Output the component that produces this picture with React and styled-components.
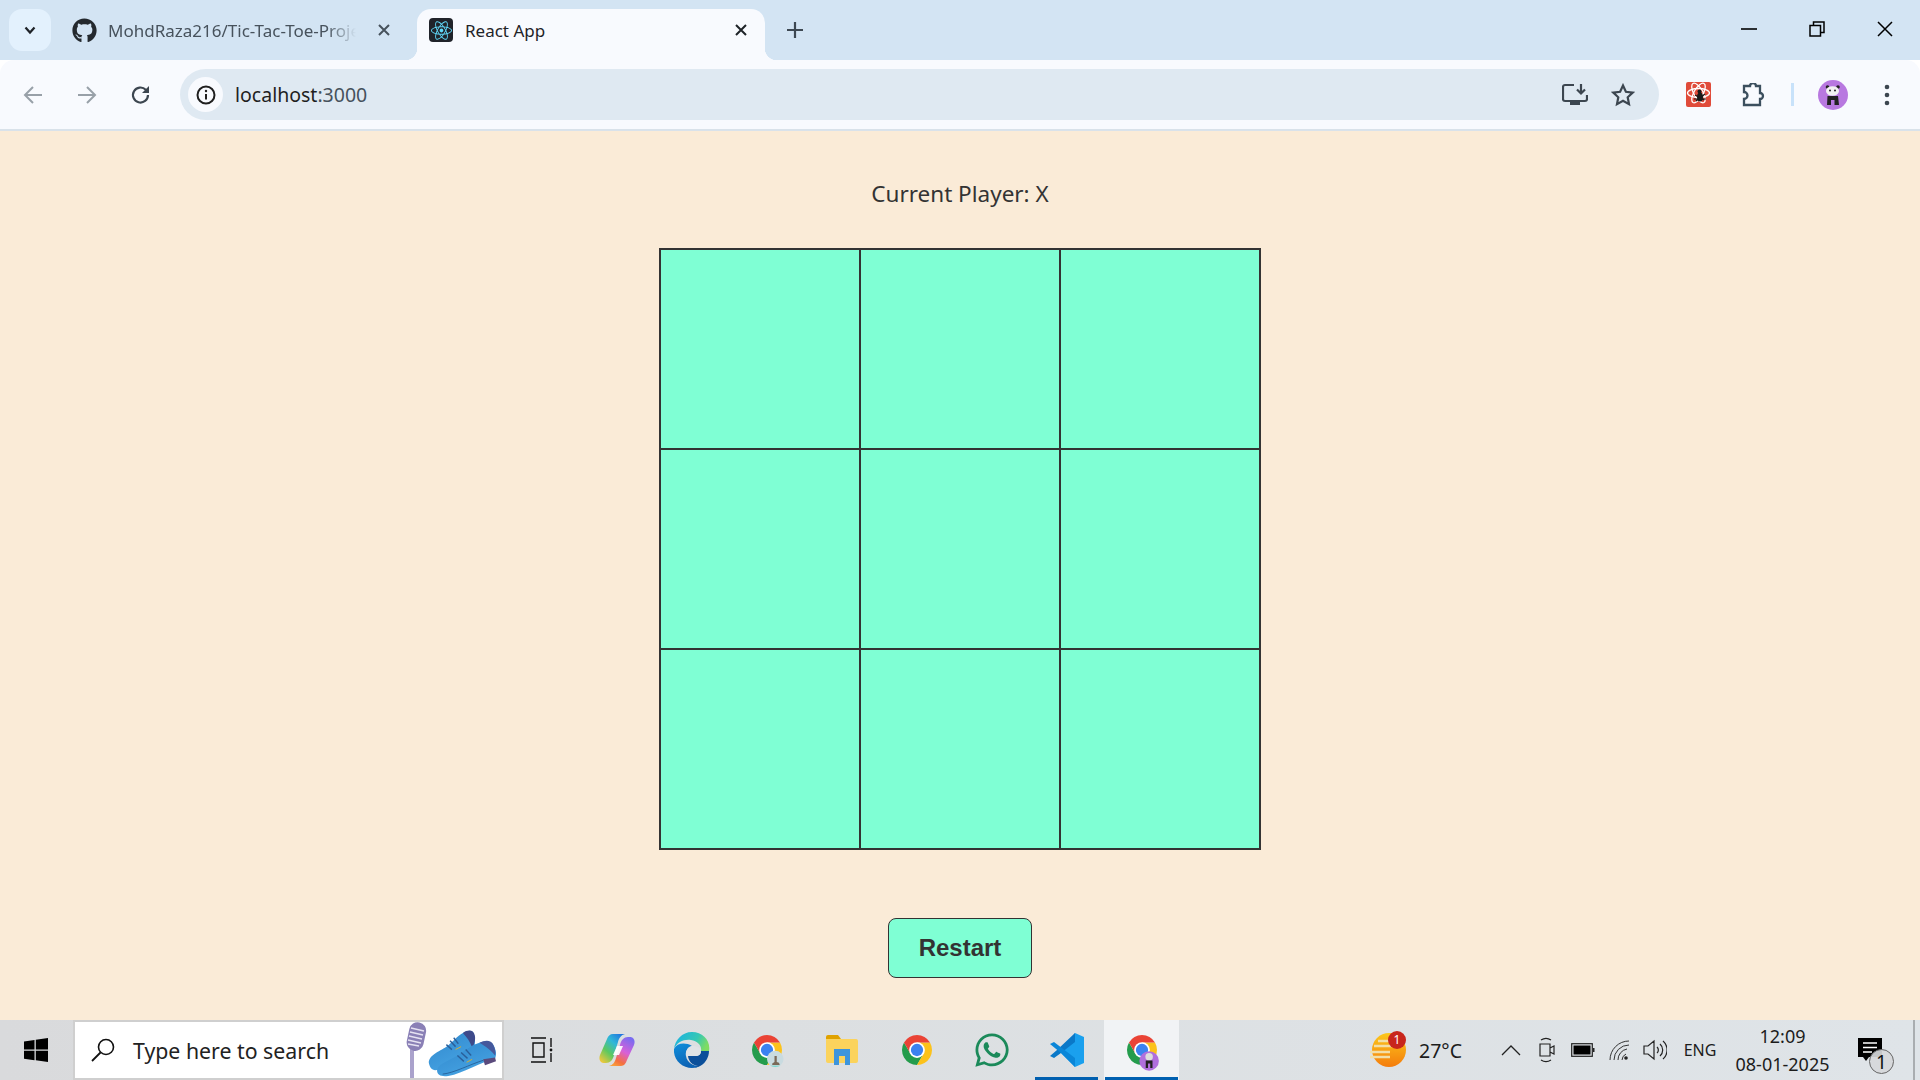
import styled, { createGlobalStyle } from "styled-components"
import { FaGithub, FaReact, FaWhatsapp } from "react-icons/fa"

const UI_FONT = `"Noto Sans", "Open Sans", "Liberation Sans", sans-serif`

const GlobalStyle = createGlobalStyle`
  html, body {
    margin: 0;
    height: 100%;
    overflow: hidden;
    font-family: ${UI_FONT};
  }
  #root {
    height: 100%;
  }
`

const Screen = styled.div`
  height: 1080px;
  display: flex;
  flex-direction: column;
`

/* browser chrome */

const TabStrip = styled.div`
  flex: 0 0 60px;
  display: flex;
  align-items: flex-start;
  padding-top: 9px;
  box-sizing: border-box;
  background: #d3e4f3;
`

const TabListButton = styled.div`
  flex: 0 0 42px;
  height: 42px;
  margin-left: 9px;
  display: flex;
  align-items: center;
  justify-content: center;
  border-radius: 13px;
  background: #e3f1fd;
`

const Tab = styled.div`
  position: relative;
  flex: 0 0 ${(props) => props.$width}px;
  min-width: 0;
  height: ${(props) => (props.$active ? 51 : 42)}px;
  padding: ${(props) =>
    props.$active ? "0 12px 9px 12px" : "0 21px 0 21px"};
  box-sizing: border-box;
  display: flex;
  align-items: center;
  gap: ${(props) => (props.$active ? 12 : 11)}px;
  font-size: 17px;
  color: ${(props) => (props.$active ? "#1f2328" : "#47525c")};
  background: ${(props) => (props.$active ? "#f8fafe" : "transparent")};
  border-radius: 14px 14px 0 0;

  ${(props) =>
    props.$active &&
    `
    &::before, &::after {
      content: "";
      position: absolute;
      bottom: 0;
      width: 12px;
      height: 12px;
    }
    &::before {
      left: -12px;
      background: radial-gradient(circle at 0 0, transparent 12px, #f8fafe 12.5px);
    }
    &::after {
      right: -12px;
      background: radial-gradient(circle at 100% 0, transparent 12px, #f8fafe 12.5px);
    }
  `}
`

const TabTitle = styled.div`
  flex: 1 1 0;
  min-width: 0;
  overflow: hidden;
  white-space: nowrap;
  ${(props) =>
    props.$fade &&
    `
    margin-right: 5px;
    mask-image: linear-gradient(90deg, #000 88%, transparent 100%);
  `}
`

const Favicon = styled.div`
  flex: 0 0 24px;
  height: 24px;
  display: flex;
  align-items: center;
  justify-content: center;
  border-radius: 4px;
  background: ${(props) => props.$bg || "transparent"};
`

const NewTab = styled.div`
  margin-left: 18px;
  height: 42px;
  display: flex;
  align-items: center;
`

const WindowControls = styled.div`
  margin-left: auto;
  margin-top: -9px;
  margin-right: 1px;
  display: flex;
`

const WindowControl = styled.div`
  width: 68px;
  height: 58px;
  display: flex;
  align-items: center;
  justify-content: center;
`

const Toolbar = styled.div`
  flex: 0 0 69px;
  display: flex;
  align-items: center;
  padding: 0 6px;
  box-sizing: border-box;
  background: #f8fafe;
  border-radius: 14px 14px 0 0;
`

const ToolSlot = styled.div`
  flex: 0 0 ${(props) => props.$width || 54}px;
  display: flex;
  align-items: center;
  justify-content: center;
`

const AddressBar = styled.div`
  flex: 1 1 0;
  height: 51px;
  margin: 0 12px;
  padding: 0 12px 0 8px;
  display: flex;
  align-items: center;
  border-radius: 26px;
  background: #dfe9f2;
`

const SiteInfo = styled.div`
  flex: 0 0 35px;
  height: 35px;
  display: flex;
  align-items: center;
  justify-content: center;
  border-radius: 50%;
  background: #f8fafe;
`

const Url = styled.div`
  flex: 1 1 0;
  margin-left: 12px;
  font-size: 19.5px;
  color: #1f1f1f;

  span {
    color: #46515c;
  }
`

const ToolDivider = styled.div`
  flex: 0 0 3px;
  height: 23px;
  margin: 0 12px 0 12px;
  background: #c8e2fa;
`

const ToolbarEdge = styled.div`
  flex: 0 0 2px;
  background: #d9e2ea;
`

/* page */

const Page = styled.main`
  flex: 1 1 0;
  display: flex;
  flex-direction: column;
  align-items: center;
  background: #faebd7;
  color: #333;
`

const Status = styled.div`
  margin-top: 46px;
  height: 33px;
  line-height: 33px;
  font-size: 22.5px;
`

const Board = styled.div`
  margin-top: 38px;
  display: grid;
  grid-template-columns: repeat(3, 200px);
  grid-template-rows: repeat(3, 200px);
  border: 1px solid #333;
`

const Cell = styled.div`
  box-sizing: border-box;
  border: 1px solid #333;
  background: #7fffd4;
`

const RestartButton = styled.button`
  margin-top: 68px;
  width: 144px;
  height: 60px;
  padding: 0;
  border: 1px solid #333;
  border-radius: 8px;
  background: #7fffd4;
  color: #333;
  font-family: "Liberation Sans", Arial, sans-serif;
  font-size: 24px;
  font-weight: bold;
`

/* taskbar */

const Taskbar = styled.footer`
  flex: 0 0 60px;
  display: flex;
  align-items: stretch;
  background: linear-gradient(90deg, #d9dadc 0%, #dcdfe1 40%, #dfe4e8 100%);
`

const StartButton = styled.div`
  flex: 0 0 73px;
  padding-right: 2px;
  box-sizing: border-box;
  display: flex;
  align-items: center;
  justify-content: center;
`

const SearchBox = styled.div`
  flex: 0 0 431px;
  box-sizing: border-box;
  display: flex;
  align-items: center;
  padding-left: 15px;
  gap: 17px;
  border: 2px solid #cfcfcf;
  background: #fff;
  font-size: 21.3px;
  color: #222;
  overflow: hidden;
`

const SearchLabel = styled.div`
  flex: 1 1 0;
  white-space: nowrap;
`

const SearchArt = styled.div`
  flex: 0 0 98px;
  height: 100%;
  display: flex;
  align-items: flex-end;

  svg {
    flex: none;
    display: block;
  }
`

const TaskSlot = styled.div`
  position: relative;
  flex: 0 0 75px;
  display: flex;
  align-items: center;
  justify-content: center;
  background: ${(props) => (props.$focused ? "#f1f3f5" : "transparent")};

  ${(props) =>
    (props.$open || props.$focused) &&
    `
    &::after {
      content: "";
      position: absolute;
      bottom: 0;
      left: ${props.$focused ? 1 : 6}px;
      right: ${props.$focused ? 1 : 6}px;
      height: 3px;
      background: #0060b0;
    }
  `}
`

const Tray = styled.div`
  margin-left: auto;
  display: flex;
  align-items: center;
  color: #1c1c1c;
`

const Weather = styled.div`
  display: flex;
  align-items: center;
  gap: 11px;
  margin-right: 31px;
  font-size: 19.5px;
`

const TraySlot = styled.div`
  flex: 0 0 ${(props) => props.$width || 36}px;
  width: ${(props) => props.$width || 36}px;
  display: flex;
  align-items: center;
  justify-content: center;
  font-size: 16px;
`

const Clock = styled.div`
  flex: 0 0 111px;
  display: flex;
  flex-direction: column;
  align-items: center;
  gap: 5px;
  font-size: 18px;
  line-height: 23px;
`

const Notifications = styled.div`
  position: relative;
  flex: 0 0 77px;
  height: 60px;
  box-sizing: border-box;
  padding-right: 11px;
  border-right: 2px solid #a9adb0;
  margin-right: 5px;
  display: flex;
  align-items: center;
  justify-content: center;
`

const NotificationCount = styled.div`
  position: absolute;
  left: 31px;
  top: 29px;
  width: 25px;
  height: 25px;
  box-sizing: border-box;
  display: flex;
  align-items: center;
  justify-content: center;
  border: 1px solid #666;
  border-radius: 50%;
  background: rgba(214, 216, 218, 0.92);
  font-size: 19px;
  color: #111;
`

/* drawings */

const PandaBadge = () => (
  <g>
    <circle cx="33.500" cy="38.500" r="13" fill="#b06fdd" />
    <circle cx="33.500" cy="33" r="5" fill="#ddd" />
    <path d="M29 38h9v10h-3v-6h-3v6h-3z" fill="#222" />
  </g>
)

const ChromeLogo = ({ badge }) => (
  <svg width="36" height="36" viewBox="0 0 48 48" overflow="visible">
    <path d="M6.680 14A20 20 0 0 0 24 44l8.660-15H15.340z" fill="#249c4c" />
    <path d="M24 14h17.320A20 20 0 0 1 24 44l8.660-15z" fill="#fcc21b" />
    <path d="M24 14h17.320a20 20 0 0 0-34.640 0l8.660 15L24 24z" fill="#ea4335" />
    <circle cx="24" cy="24" r="10.500" fill="#fff" />
    <circle cx="24" cy="24" r="8.200" fill="#3b82f0" />
    {badge === "dog" && (
      <g>
        <circle cx="35" cy="36" r="11" fill="#c9dbe0" />
        <path d="M31 44h10l-1-3-3-1v-8h-3v8l-3 2z" fill="#7a6a58" />
        <path d="M28 45a10 4 0 0 0 14 0z" fill="#62d8c8" />
      </g>
    )}
    {badge === "panda" && <PandaBadge />}
  </svg>
)

const Panda = () => (
  <svg width="30" height="30" viewBox="0 0 30 30">
    <circle cx="15" cy="15" r="15" fill="#b878e0" />
    <circle cx="9.500" cy="7" r="1.800" fill="#222" />
    <circle cx="20" cy="7" r="1.800" fill="#222" />
    <ellipse cx="14.500" cy="11" rx="6.500" ry="4.800" fill="#f2f2f2" />
    <circle cx="12" cy="10.500" r="1" fill="#222" />
    <circle cx="17" cy="10.500" r="1" fill="#222" />
    <path d="M9.500 16h10.500l1 9h-4.500v-5h-3.500v5H9z" fill="#222" />
  </svg>
)

const ReactBugExtension = () => (
  <svg width="25" height="25" viewBox="0 0 25 25">
    <rect width="25" height="25" rx="2" fill="#e04b3a" />
    <g fill="none" stroke="#fff" strokeWidth="1.300">
      <ellipse cx="12.500" cy="11" rx="11" ry="4.500" />
      <ellipse cx="12.500" cy="11" rx="11" ry="4.500" transform="rotate(60 12.500 11)" />
      <ellipse cx="12.500" cy="11" rx="11" ry="4.500" transform="rotate(120 12.500 11)" />
    </g>
    <ellipse cx="14" cy="15" rx="3" ry="4.500" fill="#1a1a1a" />
    <circle cx="13.500" cy="9.500" r="2" fill="#1a1a1a" />
    <path d="M9 13l9 5M19 12l-9 7M8 17h12" stroke="#1a1a1a" strokeWidth="1.200" />
  </svg>
)

const EdgeLogo = () => (
  <svg width="36" height="36" viewBox="0 0 36 36">
    <defs>
      <linearGradient id="edgeTop" x1="0.1" y1="0.2" x2="1" y2="0.5">
        <stop offset="0" stopColor="#1fb5dc" />
        <stop offset="0.6" stopColor="#35c8b4" />
        <stop offset="1" stopColor="#7fdc62" />
      </linearGradient>
      <linearGradient id="edgeBody" x1="0" y1="0" x2="0.4" y2="1">
        <stop offset="0" stopColor="#0f8fdc" />
        <stop offset="1" stopColor="#0c62b4" />
      </linearGradient>
    </defs>
    <path d="M18 0C8 0 1 8 0 17c3-7 10-10 17-9 7 1 11 6 10 11h8c2-10-6-19-17-19z" fill="url(#edgeTop)" />
    <path d="M0 17C-1 28 8 36 18 36c3 0 5-1 7-2-5 0-12-3-13-10-1-6 3-9 6-10-7-4-15-3-18 3z" fill="url(#edgeBody)" />
    <path d="M18 36c6 0 12-3 15-9 1-2 2-5 2-8h-8c0 3-2 5-6 5-3 0-5 0-7-1 0 6 4 10 10 11-2 1-4 2-6 2z" fill="#0b4f9a" />
    <path d="M12 24c-1-6 3-10 6-10 5 0 9 2 9 5 0 3-2 5-6 5-3 0-6 0-9 0z" fill="#dfe3e6" />
  </svg>
)

const FolderLogo = () => (
  <svg width="32" height="30" viewBox="0 0 32 30">
    <path d="M0 2a2 2 0 0 1 2-2h10l3 4H0z" fill="#e0a200" />
    <path d="M0 4h30a2 2 0 0 1 2 2v20a2 2 0 0 1-2 2H2a2 2 0 0 1-2-2z" fill="#fbd35c" />
    <path d="M8 14h16v16h-5v-9h-6v9H8z" fill="#3d95dc" />
  </svg>
)

const VsCodeLogo = () => (
  <svg width="36" height="36" viewBox="0 0 36 36">
    <path d="M26 1l9 4v26l-9 4-14-14z" fill="#1aa0ee" />
    <path d="M26 1v9L12 21l-7 5-4-2 7-6z" fill="#0a78c8" />
    <path d="M1 12l4-2 21 16v9L12 21z" fill="#0a86d8" />
  </svg>
)

const CopilotLogo = () => (
  <svg width="36" height="34" viewBox="0 0 36 34">
    <defs>
      <linearGradient id="copLeft" x1="0.9" y1="0" x2="0.1" y2="1">
        <stop offset="0" stopColor="#1f6fe0" />
        <stop offset="0.35" stopColor="#2fb8d8" />
        <stop offset="0.65" stopColor="#5cc860" />
        <stop offset="1" stopColor="#f6c83a" />
      </linearGradient>
      <linearGradient id="copRight" x1="0.7" y1="0" x2="0.2" y2="1">
        <stop offset="0" stopColor="#7a6cf0" />
        <stop offset="0.45" stopColor="#d860d8" />
        <stop offset="0.8" stopColor="#f4703e" />
        <stop offset="1" stopColor="#f9a03a" />
      </linearGradient>
    </defs>
    <path d="M14 1h12c-4 1-6 4-7 8l-4 13c-1 5-4 8-8 8H5c-4 0-5.500-4-4-8L8 6c1-3 3-5 6-5z" fill="url(#copLeft)" />
    <path d="M22 33H10c4-1 6-4 7-8l4-13c1-5 4-8 8-8h2c4 0 5.500 4 4 8l-7 15c-1 3-3 6-6 6z" fill="url(#copRight)" />
    <path d="M18 13h6l-4 9h-6z" fill="#fff" opacity="0.92" />
  </svg>
)

const Microphone = () => (
  <svg width="24" height="56" viewBox="0 0 24 56">
    <rect x="6" y="24" width="4" height="32" fill="#aaa2cc" />
    <rect x="4" y="0" width="17" height="29" rx="8.500" fill="#8a80b6" transform="rotate(12 12 14)" />
    <path d="M7 6l13 3M6 10l13 3M5 14l13 3M4 18l13 3M4 22l11 2" stroke="#e6e2f2" strokeWidth="1.300" />
  </svg>
)

const Shoes = () => (
  <svg width="68" height="50" viewBox="0 0 74 51" preserveAspectRatio="none">
    <defs>
      <linearGradient id="shoeBlue" x1="0" y1="0" x2="0.6" y2="1">
        <stop offset="0" stopColor="#2f86cc" />
        <stop offset="1" stopColor="#46a3e2" />
      </linearGradient>
    </defs>
    <path d="M1 36C0 28 12 24 20 19c6-4 12-11 18-14 6-3 11-3 12 1 2 6 1 14-1 20-13 6-29 16-41 17-4 0-6-3-7-7z" fill="url(#shoeBlue)" />
    <path d="M38 5c6-4 12-3 13 3 1 4-1 10-3 12-2-6-6-11-10-15z" fill="#3e4a8a" />
    <path d="M10 42c2-6 16-10 24-15 6-4 14-10 22-12 6-2 13-2 15 2 3 5 4 10 2 14-13 3-35 15-51 18-8 1-13-1-12-7z" fill="url(#shoeBlue)" />
    <path d="M56 15c6-3 13-3 15 2 2 4 3 7 2 11-3-4-11-10-17-13z" fill="#45589c" />
    <path d="M60 32l13-2 1 4-12 4z" fill="#5a4a7c" />
    <path d="M16 47c12-1 30-10 44-14" stroke="#27639c" strokeWidth="1" fill="none" />
    <path d="M24 13l6 6M20 17l6 5M28 10l5 6M36 25l7 6M32 28l7 6M41 22l6 6" stroke="#2a5f9a" strokeWidth="1.500" />
    <path d="M30 22l6-3M42 35l6-3" stroke="#d8b030" strokeWidth="1" />
  </svg>
)

const WeatherIcon = () => (
  <svg width="38" height="38" viewBox="0 0 38 38">
    <defs>
      <linearGradient id="sun" x1="0" y1="0" x2="0" y2="1">
        <stop offset="0" stopColor="#fcc81c" />
        <stop offset="1" stopColor="#f47c0c" />
      </linearGradient>
    </defs>
    <circle cx="19" cy="19" r="17" fill="url(#sun)" />
    <path d="M8 10h12M4 15h18M0 21h20M0 26h20" stroke="#f2dfa8" strokeWidth="2.500" />
    <circle cx="27" cy="9" r="9" fill="#c8261c" />
    <text x="27" y="13" textAnchor="middle" fontSize="12" fill="#fff" fontFamily="Noto Sans">1</text>
  </svg>
)

const stroke = (color, width = 2) => ({
  fill: "none",
  stroke: color,
  strokeWidth: width,
})

export default function App() {
  const cells = Array.from({ length: 9 }, (_, i) => i)

  return (
    <Screen>
      <GlobalStyle />

      <TabStrip>
        <TabListButton>
          <svg width="14" height="14" viewBox="0 0 14 14">
            <path d="M2.500 4.500L7 9.500l4.500-5" {...stroke("#1f2328", 2.2)} />
          </svg>
        </TabListButton>
        <Tab $width={366}>
          <Favicon>
            <FaGithub size={25} color="#24292e" />
          </Favicon>
          <TabTitle $fade>MohdRaza216/Tic-Tac-Toe-Project</TabTitle>
          <Favicon>
            <svg width="14" height="14" viewBox="0 0 14 14">
              <path d="M2 2l10 10M12 2L2 12" {...stroke("#47525c")} />
            </svg>
          </Favicon>
        </Tab>
        <Tab $width={348} $active>
          <Favicon $bg="#20232a">
            <FaReact size={21} color="#61dafb" />
          </Favicon>
          <TabTitle>React App</TabTitle>
          <Favicon>
            <svg width="14" height="14" viewBox="0 0 14 14">
              <path d="M2 2l10 10M12 2L2 12" {...stroke("#1f2328")} />
            </svg>
          </Favicon>
        </Tab>
        <NewTab>
          <svg width="24" height="24" viewBox="0 0 24 24">
            <path d="M12 4v16M4 12h16" {...stroke("#3d4852", 2.2)} />
          </svg>
        </NewTab>
        <WindowControls>
          <WindowControl>
            <svg width="16" height="16" viewBox="0 0 16 16">
              <path d="M0 8h16" {...stroke("#000", 1.6)} />
            </svg>
          </WindowControl>
          <WindowControl>
            <svg width="16" height="16" viewBox="0 0 16 16">
              <path d="M1 4.500h10.500V15H1zM4.500 4.500V1H15v10.500h-3.500" {...stroke("#000", 1.5)} />
            </svg>
          </WindowControl>
          <WindowControl>
            <svg width="16" height="16" viewBox="0 0 16 16">
              <path d="M1 1l14 14M15 1L1 15" {...stroke("#000", 1.5)} />
            </svg>
          </WindowControl>
        </WindowControls>
      </TabStrip>

      <Toolbar>
        <ToolSlot>
          <svg width="22" height="22" viewBox="0 0 22 22">
            <path d="M20 11H3M11 3l-8 8 8 8" {...stroke("#98a0a8")} />
          </svg>
        </ToolSlot>
        <ToolSlot>
          <svg width="22" height="22" viewBox="0 0 22 22">
            <path d="M2 11h17M11 3l8 8-8 8" {...stroke("#98a0a8")} />
          </svg>
        </ToolSlot>
        <ToolSlot>
          <svg width="22" height="22" viewBox="0 0 22 22">
            <path d="M18 11a7.500 7.500 0 1 1-2.200-5.300L18 8" {...stroke("#3c4650", 2.2)} />
            <path d="M19 2v7h-7z" fill="#3c4650" />
          </svg>
        </ToolSlot>
        <AddressBar>
          <SiteInfo>
            <svg width="20" height="20" viewBox="0 0 20 20">
              <circle cx="10" cy="10" r="8.500" {...stroke("#1f1f1f")} />
              <path d="M10 9v5.500" {...stroke("#1f1f1f")} />
              <circle cx="10" cy="6" r="1.200" fill="#1f1f1f" />
            </svg>
          </SiteInfo>
          <Url>
            localhost<span>:3000</span>
          </Url>
          <ToolSlot $width={48}>
            <svg width="26" height="24" viewBox="0 0 26 24">
              <path d="M12 2H3a2 2 0 0 0-2 2v12a2 2 0 0 0 2 2h20a2 2 0 0 0 2-2v-4" {...stroke("#3c4650", 2.2)} />
              <path d="M8 19h10v3H8z" fill="#3c4650" />
              <path d="M19 1v9M15 6.500l4 4 4-4" {...stroke("#3c4650", 2.2)} />
            </svg>
          </ToolSlot>
          <ToolSlot $width={48}>
            <svg width="24" height="24" viewBox="0 0 24 24">
              <path d="M12 2.500l2.900 6.300 6.800.8-5 4.700 1.300 6.800-6-3.400-6 3.400 1.300-6.800-5-4.700 6.800-.8z" {...stroke("#3c4650", 2.2)} />
            </svg>
          </ToolSlot>
        </AddressBar>
        <ToolSlot>
          <ReactBugExtension />
        </ToolSlot>
        <ToolSlot>
          <svg width="26" height="24" viewBox="-2 0 26 24">
            <path d="M3 3h6a3 3 0 0 1 6 0h4v7a2.500 2.500 0 0 1 0 6v6H3v-6a3 3 0 0 0 0-7z" {...stroke("#3c4f5e", 2.3)} />
          </svg>
        </ToolSlot>
        <ToolDivider />
        <ToolSlot>
          <Panda />
        </ToolSlot>
        <ToolSlot>
          <svg width="6" height="22" viewBox="0 0 6 22">
            <circle cx="3" cy="3" r="2.300" fill="#3c4650" />
            <circle cx="3" cy="11" r="2.300" fill="#3c4650" />
            <circle cx="3" cy="19" r="2.300" fill="#3c4650" />
          </svg>
        </ToolSlot>
      </Toolbar>
      <ToolbarEdge />

      <Page>
        <Status>Current Player: X</Status>
        <Board>
          {cells.map((cell) => (
            <Cell key={cell} />
          ))}
        </Board>
        <RestartButton>Restart</RestartButton>
      </Page>

      <Taskbar>
        <StartButton>
          <svg width="26" height="26" viewBox="0 0 26 26">
            <path d="M1 4.500l10.500-1.500v9.500H1zM12.800 2.800L25 1v11.500H12.800zM1 13.800h10.500v9.500L1 21.800zM12.800 13.800H25V25l-12.200-1.800z" fill="#000" />
          </svg>
        </StartButton>
        <SearchBox>
          <svg width="26" height="26" viewBox="0 0 26 26">
            <circle cx="16" cy="10" r="7.500" {...stroke("#111", 1.6)} />
            <path d="M10.500 15.500L2 24" {...stroke("#111", 1.8)} />
          </svg>
          <SearchLabel>Type here to search</SearchLabel>
          <SearchArt>
            <Microphone />
            <Shoes />
          </SearchArt>
        </SearchBox>
        <TaskSlot>
          <svg width="24" height="26" viewBox="0 0 24 26">
            <path d="M1 1h15M1 25h15M3 6h11v14H3zM21 1v9M21 16v9" {...stroke("#111", 1.4)} />
            <circle cx="21" cy="13" r="1.400" fill="#111" />
          </svg>
        </TaskSlot>
        <TaskSlot>
          <CopilotLogo />
        </TaskSlot>
        <TaskSlot>
          <EdgeLogo />
        </TaskSlot>
        <TaskSlot>
          <ChromeLogo badge="dog" />
        </TaskSlot>
        <TaskSlot>
          <FolderLogo />
        </TaskSlot>
        <TaskSlot>
          <ChromeLogo />
        </TaskSlot>
        <TaskSlot>
          <FaWhatsapp size={38} color="#1b8a5a" />
        </TaskSlot>
        <TaskSlot $open>
          <VsCodeLogo />
        </TaskSlot>
        <TaskSlot $focused>
          <ChromeLogo badge="panda" />
        </TaskSlot>

        <Tray>
          <Weather>
            <WeatherIcon />
            27°C
          </Weather>
          <TraySlot>
            <svg width="20" height="12" viewBox="0 0 20 12">
              <path d="M1 11l9-9 9 9" {...stroke("#222", 1.3)} />
            </svg>
          </TraySlot>
          <TraySlot>
            <svg width="18" height="28" viewBox="0 0 18 28">
              <path d="M2 8h10v12H2zM12 12l4-2v8l-4-2M3 4c3-2 7-2 10 0M3 24c3 2 7 2 10 0" {...stroke("#222", 1.2)} />
            </svg>
          </TraySlot>
          <TraySlot>
            <svg width="24" height="14" viewBox="0 0 24 14">
              <rect x="0.700" y="0.700" width="20.600" height="12.600" {...stroke("#222", 1.2)} />
              <rect x="2.500" y="2.500" width="17" height="9" fill="#000" />
              <rect x="22" y="5" width="1.500" height="4" fill="#222" />
            </svg>
          </TraySlot>
          <TraySlot>
            <svg width="20" height="20" viewBox="0 0 20 20">
              <path d="M1 20A19 19 0 0 1 20 1M5 20A15 15 0 0 1 20 5M9 20A11 11 0 0 1 18 9M13 20a7 7 0 0 1 4-6" {...stroke("#333", 1)} />
              <circle cx="17" cy="18" r="1.800" fill="#222" />
            </svg>
          </TraySlot>
          <TraySlot>
            <svg width="24" height="22" viewBox="0 0 24 22">
              <path d="M1 7h4l6-5v18l-6-5H1zM14 8a4 4 0 0 1 0 6M17 5a8 8 0 0 1 0 12M20 2a12 12 0 0 1 0 18" {...stroke("#222", 1.2)} />
            </svg>
          </TraySlot>
          <TraySlot $width={54}>ENG</TraySlot>
          <Clock>
            <div>12:09</div>
            <div>08-01-2025</div>
          </Clock>
          <Notifications>
            <svg width="24" height="24" viewBox="0 0 24 24">
              <path d="M0 0h24v19H11l-3 4-3-4H0z" fill="#000" />
              <path d="M5 5h14M5 9.500h14M5 14h9" {...stroke("#fff", 1.4)} />
            </svg>
            <NotificationCount>1</NotificationCount>
          </Notifications>
        </Tray>
      </Taskbar>
    </Screen>
  )
}
